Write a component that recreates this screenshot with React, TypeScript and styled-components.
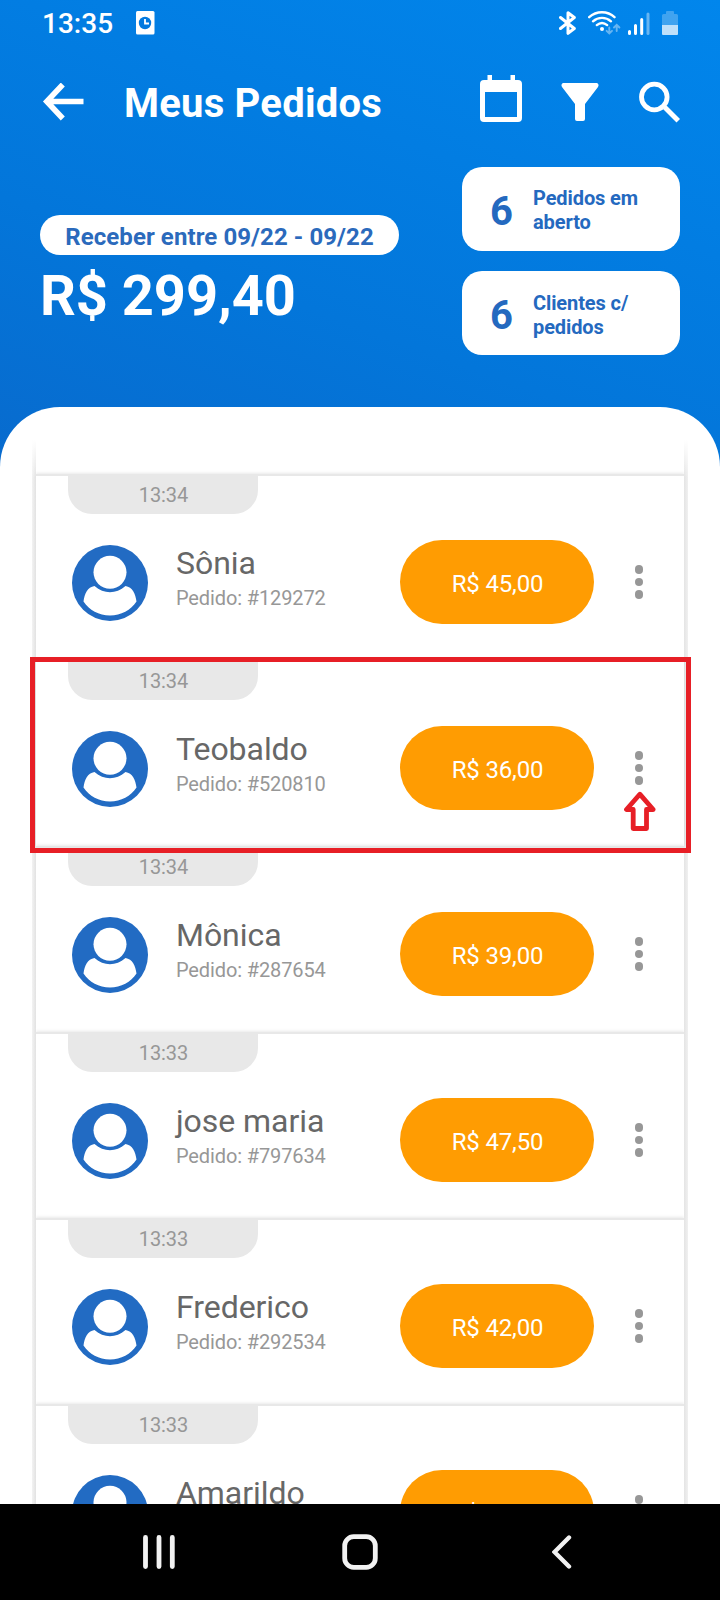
import React from "react";
import styled, { createGlobalStyle } from "styled-components";

const GlobalStyle = createGlobalStyle`
  * { box-sizing: border-box; }
  body { margin: 0; font-family: Roboto, "Liberation Sans", sans-serif; }
  svg { display: block; flex: none; }
`;

const Screen = styled.div`
  display: flex;
  flex-direction: column;
  width: 720px;
  height: 1600px;
  overflow: hidden;
  background: linear-gradient(200deg, #0186ec 0px, #027de2 240px, #0376da 430px, #086bce 675px);
`;

const StatusBar = styled.div`
  display: flex;
  flex: none;
  align-items: center;
  justify-content: space-between;
  height: 46px;
  padding: 0 42px;
`;

const StatusGroup = styled.div<{ $gap: number }>`
  display: flex;
  align-items: center;
  gap: ${(p) => p.$gap}px;
`;

const Clock = styled.span`
  padding-top: 2px;
  font-size: 28px;
  line-height: 44px;
  font-weight: 500;
  color: #fff;
`;

const Toolbar = styled.header`
  display: flex;
  flex: none;
  align-items: center;
  height: 112px;
  padding: 0 40px 0 42px;
`;

const Title = styled.h1`
  flex: 1;
  margin: 4px 0 0 40px;
  font-size: 40px;
  line-height: 48px;
  font-weight: 700;
  letter-spacing: 0.22px;
  color: #fff;
`;

const Actions = styled.div`
  display: flex;
  align-items: center;
  gap: 39px;
`;

const Summary = styled.section`
  display: flex;
  flex: none;
  justify-content: space-between;
  height: 249px;
  padding: 9px 40px 0;
`;

const Totals = styled.div`
  display: flex;
  flex-direction: column;
  align-items: flex-start;
  padding-top: 48px;
`;

const Period = styled.div`
  width: 359px;
  height: 40px;
  border-radius: 20px;
  background: #fff;
  text-align: center;
  font-size: 24px;
  line-height: 44px;
  font-weight: 700;
  letter-spacing: 0.08px;
  color: #2b6abc;
`;

const Amount = styled.div`
  margin-top: 8px;
  font-size: 56px;
  line-height: 66px;
  font-weight: 700;
  letter-spacing: -0.05px;
  color: #fff;
`;

const Counters = styled.div`
  display: flex;
  flex-direction: column;
  gap: 20px;
`;

const Counter = styled.div`
  display: flex;
  align-items: center;
  width: 218px;
  height: 84px;
  padding-left: 28px;
  border-radius: 20px;
  background: #fff;
  color: #2469bf;
`;

const Count = styled.span`
  width: 43px;
  padding-top: 4px;
  font-size: 40px;
  line-height: 47px;
  font-weight: 700;
`;

const CountLabel = styled.span<{ $drop?: number }>`
  width: 120px;
  padding-top: ${(p) => 2 + (p.$drop ?? 0)}px;
  font-size: 20px;
  line-height: 24px;
  font-weight: 700;
  letter-spacing: -0.1px;
`;

const Sheet = styled.main`
  flex: 1;
  min-height: 0;
  overflow: hidden;
  padding: 33px 32px 0;
  border-radius: 60px 60px 0 0;
  background: #fff;
`;

const List = styled.div`
  padding: 34px 4px 0;
  background:
    linear-gradient(#fff, rgba(255, 255, 255, 0)) top / 100% 38px no-repeat,
    linear-gradient(90deg, #f3f3f3, #e2e2e2) left / 4px 100% no-repeat,
    linear-gradient(270deg, #f0f0f0, #e4e4e4) right / 4px 100% no-repeat;
`;

const Row = styled.article`
  position: relative;
  height: 186px;
  border-top: 2px solid #e8e8e8;
  box-shadow: 0 -1px 3px rgba(0, 0, 0, 0.09);
  clip-path: inset(-4px 0 0 0);
`;

const TimeTab = styled.div`
  width: 190px;
  height: 38px;
  margin-left: 32px;
  padding-left: 1px;
  border-radius: 0 0 24px 24px;
  background: #e8e8e8;
  text-align: center;
  font-size: 20px;
  line-height: 39px;
  letter-spacing: -0.1px;
  color: #979797;
`;

const RowBody = styled.div`
  display: flex;
  align-items: center;
  height: 136px;
  padding: 0 41px 0 36px;
`;

const Client = styled.div`
  flex: 1;
  margin-left: 28px;
  padding-bottom: 10px;
  white-space: nowrap;
`;

const ClientName = styled.div`
  font-size: 32px;
  line-height: 38px;
  letter-spacing: -0.05px;
  color: #676767;
`;

const OrderCode = styled.div`
  margin-top: 4px;
  font-size: 20px;
  line-height: 24px;
  letter-spacing: -0.12px;
  color: #979797;
`;

const Price = styled.button`
  width: 194px;
  height: 84px;
  margin-right: 41px;
  padding: 4px 0 0 2px;
  border: 0;
  border-radius: 42px;
  background: #ff9c02;
  font: 400 24px/28px Roboto, sans-serif;
  letter-spacing: -0.15px;
  color: #fff;
`;

const MenuDots = styled.div`
  display: flex;
  flex-direction: column;
  gap: 4px;
`;

const Dot = styled.i`
  width: 8.5px;
  height: 8.5px;
  border-radius: 50%;
  background: #979797;
`;

const Highlight = styled.div`
  position: absolute;
  z-index: 2;
  top: -5px;
  left: -6px;
  width: 661px;
  height: 196px;
  border: 5px solid #e71f26;
`;

const Pointer = styled.svg`
  position: absolute;
  top: 129px;
  right: 28px;
`;

const HighlightedRow = styled(Row)`
  z-index: 2;
  clip-path: none;
`;

const NavBar = styled.nav`
  display: grid;
  grid-template-columns: 32px 36px 20px;
  justify-content: space-between;
  flex: none;
  align-items: center;
  height: 96px;
  padding: 0 148px 0 143px;
  background: #000;
`;

const HomeKey = styled.svg`
  margin-left: -4px;
`;

const orders = [
  { time: "13:34", name: "Sônia", code: "129272", price: "45,00" },
  { time: "13:34", name: "Teobaldo", code: "520810", price: "36,00", marked: true },
  { time: "13:34", name: "Mônica", code: "287654", price: "39,00" },
  { time: "13:33", name: "jose maria", code: "797634", price: "47,50" },
  { time: "13:33", name: "Frederico", code: "292534", price: "42,00" },
  { time: "13:33", name: "Amarildo", code: "292533", price: "42,00" },
];

const AvatarDrawing = styled.svg`
  margin-top: 2px;
`;

const Avatar = () => (
  <AvatarDrawing width="76" height="76" viewBox="0 0 76 76">
    <circle cx="38" cy="38" r="38" fill="#226bc3" />
    <circle cx="38" cy="27.3" r="16.5" fill="#fff" />
    <path
      d="M22.500 41C15.500 42 12.500 49 11.500 56.500C17 65 27 70.500 38 70.500S59 65 64.500 56.500C63.500 49 60.500 42 53.500 41C44 49.300 32 49.300 22.500 41Z"
      fill="#fff"
    />
  </AvatarDrawing>
);

const OrderRow = ({ order }: { order: (typeof orders)[number] }) => {
  const Container = order.marked ? HighlightedRow : Row;
  return (
    <Container>
      <TimeTab>{order.time}</TimeTab>
      <RowBody>
        <Avatar />
        <Client>
          <ClientName>{order.name}</ClientName>
          <OrderCode>Pedido: #{order.code}</OrderCode>
        </Client>
        <Price>R$ {order.price}</Price>
        <MenuDots>
          <Dot />
          <Dot />
          <Dot />
        </MenuDots>
      </RowBody>
      {order.marked && (
        <>
          <Highlight />
          <Pointer width="33" height="41" viewBox="0 0 33 41">
            <path
              d="M16.800 3.200L3.500 18.500H10.200V37.500H23.500V18.500H30.200Z"
              fill="#fff"
              stroke="#e71f26"
              strokeWidth="4.800"
              strokeLinejoin="round"
            />
          </Pointer>
        </>
      )}
    </Container>
  );
};

export default function App() {
  return (
    <>
      <GlobalStyle />
      <Screen>
        <StatusBar>
          <StatusGroup $gap={23}>
            <Clock>13:35</Clock>
            <svg width="19" height="24" viewBox="0 0 19 24">
              <rect width="18.500" height="23.500" rx="1.500" fill="#fff" />
              <circle cx="9" cy="12" r="6.200" fill="#0279df" />
              <path d="M9 8V12.500H13" fill="none" stroke="#fff" strokeWidth="1.800" />
            </svg>
          </StatusGroup>
          <StatusGroup $gap={0}>
            <svg width="29" height="24" viewBox="0 0 29 24">
              <path
                d="M1.500 6.500L15.300 17.500L9 22.300V1.700L15.300 6.500L1.500 17.500"
                fill="none"
                stroke="#fff"
                strokeWidth="3"
                strokeLinecap="round"
                strokeLinejoin="round"
              />
            </svg>
            <svg width="40" height="24" viewBox="0 0 40 24">
              <g fill="none" stroke="#fff" strokeWidth="2.400" strokeLinecap="round">
                <path d="M1.200 6.200C8.500-.4 19.500-.4 26.500 6.200" />
                <path d="M5 10.300C10.200 5.700 17.800 5.700 23 10.300" />
                <path d="M8.800 14.100C12 11.400 16 11.400 19.200 14.100" />
              </g>
              <circle cx="14" cy="18" r="2" fill="#fff" />
              <g fill="none" stroke="#fff" strokeWidth="1.900" opacity=".4" strokeLinecap="round">
                <path d="M21.300 16.500V22M18.600 19.800L21.300 22.500L24 19.800" />
                <path d="M28.700 20V14.500M26 16.500L28.700 13.800L31.400 16.500" />
              </g>
            </svg>
            <svg width="34" height="24" viewBox="0 0 34 24">
              <g stroke="#fff" strokeWidth="3" strokeLinecap="round">
                <path d="M1.500 20.500V22.500M7.500 14.500V22.500M13.700 8.500V22.500" />
                <path d="M20 3V22.500" opacity=".4" />
              </g>
            </svg>
            <svg width="16" height="24" viewBox="0 0 16 24">
              <path d="M0 14V4.500Q0 3 1.500 3H4V1Q4 0 5 0H11Q12 0 12 1V3H14.500Q16 3 16 4.500V14Z" fill="#fff" opacity=".25" />
              <path d="M0 14H16V23Q16 24 15 24H1Q0 24 0 23Z" fill="#fff" opacity=".75" />
            </svg>
          </StatusGroup>
        </StatusBar>

        <Toolbar>
          <svg width="42" height="38" viewBox="0 0 42 38">
            <path d="M41.500 18.500H5M20.800 1.500L4.800 18.500L20.800 35.500" fill="none" stroke="#fff" strokeWidth="5.600" />
          </svg>
          <Title>Meus Pedidos</Title>
          <Actions>
            <svg width="43" height="54" viewBox="1 0 43 54">
              <path
                fill="#fff"
                fillRule="evenodd"
                d="M8 0H12.500V5H31V0H35.500V5H38.500Q42.500 5 42.500 9V43Q42.500 47 38.500 47H4.500Q.5 47 .5 43V9Q.5 5 4.500 5H8ZM5.500 17V42H37.500V17Z"
                transform="translate(.5)"
              />
            </svg>
            <svg width="38" height="38" viewBox="0 0 38 38" overflow="visible">
              <path
                fill="#fff"
                transform="translate(-1)"
                d="M2 0H36Q38.500 1.500 37 4L24 21V36Q24 38 22 38H16Q14 38 14 36V21L1 4Q-.5 1.500 2 0Z"
              />
            </svg>
            <svg width="41" height="42" viewBox="0 0 41 42">
              <circle cx="15.300" cy="16" r="12.800" fill="none" stroke="#fff" strokeWidth="4.800" />
              <path d="M24.500 25L28 25L41 38L37.500 41.500L24.500 28.500Z" fill="#fff" />
            </svg>
          </Actions>
        </Toolbar>

        <Summary>
          <Totals>
            <Period>Receber entre 09/22 - 09/22</Period>
            <Amount>R$ 299,40</Amount>
          </Totals>
          <Counters>
            <Counter>
              <Count>6</Count>
              <CountLabel>Pedidos em aberto</CountLabel>
            </Counter>
            <Counter>
              <Count>6</Count>
              <CountLabel $drop={2}>Clientes c/ pedidos</CountLabel>
            </Counter>
          </Counters>
        </Summary>

        <Sheet>
          <List>
            {orders.map((order) => (
              <OrderRow key={order.name} order={order} />
            ))}
          </List>
        </Sheet>

        <NavBar>
          <svg width="32" height="34" viewBox="0 0 32 34">
            <path d="M2.500 2.500V31.500M16 2.500V31.500M29.300 2.500V31.500" stroke="#f2f2f2" strokeWidth="4.800" strokeLinecap="round" />
          </svg>
          <HomeKey width="36" height="36" viewBox="0 0 36 36">
            <rect x="2.700" y="2.700" width="30.600" height="30.600" rx="9" fill="none" stroke="#f2f2f2" strokeWidth="4.800" />
          </HomeKey>
          <svg width="20" height="34" viewBox="0 0 20 34">
            <path d="M17 2.500L2.500 17L17 31.500" fill="none" stroke="#f2f2f2" strokeWidth="4.400" strokeLinecap="round" />
          </svg>
        </NavBar>
      </Screen>
    </>
  );
}
